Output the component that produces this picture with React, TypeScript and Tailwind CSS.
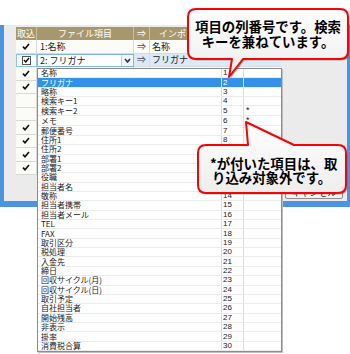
import { Fragment } from "react";

const ITEMS = [
  "名称",
  "フリガナ",
  "略称",
  "検索キー1",
  "検索キー2",
  "メモ",
  "郵便番号",
  "住所1",
  "住所2",
  "部署1",
  "部署2",
  "役職",
  "担当者名",
  "敬称",
  "担当者携帯",
  "担当者メール",
  "TEL",
  "FAX",
  "取引区分",
  "税処理",
  "入金先",
  "締日",
  "回収サイクル(月)",
  "回収サイクル(日)",
  "取引予定",
  "自社担当者",
  "開始残高",
  "非表示",
  "掛率",
  "消費税合算",
];

const CHECKS = ["y", "box", "y", "y", "", "", "y", "y", "y", "y"];

function Check() {
  return (
    <svg width="8" height="7" viewBox="0 0 8 7">
      <path d="M1 3.6 L3 5.8 L7 1" fill="none" stroke="#111" strokeWidth="1.6" />
    </svg>
  );
}

function Callouts() {
  return (
    <svg className="pointer-events-none absolute inset-0" width="350" height="354">
      <defs>
        <linearGradient id="fill" x1="0" y1="0" x2="0" y2="1">
          <stop offset="0" stopColor="#ffffff" />
          <stop offset="1" stopColor="#ededed" />
        </linearGradient>
      </defs>
      <path
        d="M197.5,10.5 H341.5 Q349.5,10.5 349.5,18.5 V52.5 Q349.5,60.5 341.5,60.5 H244.5 L230.5,78.5 L233.5,60.5 H197.5 Q189.5,60.5 189.5,52.5 V18.5 Q189.5,10.5 197.5,10.5 Z"
        fill="#555"
        opacity="0.45"
      />
      <path
        d="M196,9 H340 Q348,9 348,17 V51 Q348,59 340,59 H243 L229,77 L232,59 H196 Q188,59 188,51 V17 Q188,9 196,9 Z"
        fill="url(#fill)"
        stroke="#ff0000"
        strokeWidth="2"
        strokeLinejoin="round"
      />
      <path
        d="M207.5,146.5 H249.5 L247.5,123.5 L295.5,146.5 H339.5 Q347.5,146.5 347.5,154.5 V186.5 Q347.5,194.5 339.5,194.5 H207.5 Q199.5,194.5 199.5,186.5 V154.5 Q199.5,146.5 207.5,146.5 Z"
        fill="#555"
        opacity="0.45"
      />
      <path
        d="M206,145 H248 L246,122 L294,145 H338 Q346,145 346,153 V185 Q346,193 338,193 H206 Q198,193 198,185 V153 Q198,145 206,145 Z"
        fill="url(#fill)"
        stroke="#ff0000"
        strokeWidth="2"
        strokeLinejoin="round"
      />
    </svg>
  );
}

export default function App() {
  return (
    <div className="relative h-[354px] w-[350px] overflow-hidden bg-white font-['Noto_Sans_CJK_JP','Liberation_Sans',sans-serif] text-[#1a1a1a]">
      <div className="mt-[25px] flex h-[182px] w-[350px] flex-col border-b-[6px] border-l-4 border-r-[3px] border-[#4a94e2] bg-[#ebebeb] pl-[12px] pt-[2px]">
        <div className="w-[265px] bg-[#fbfbf8] text-[9px] leading-none">
          <div className="flex h-[13px] bg-[#a6986c] text-white">
            <div className="flex w-[21px] items-center justify-center border-r border-[#c9bfa3]">取込</div>
            <div className="flex w-[97px] items-center justify-center border-r border-[#c9bfa3]">ファイル項目</div>
            <div className="flex w-[16px] items-center justify-center border-r border-[#c9bfa3]">⇒</div>
            <div className="flex w-[131px] items-center pl-[9px]">インポート先項目</div>
          </div>
          {CHECKS.map((c, i) => (
            <div key={i} className="flex h-[13.5px]">
              {c === "box" ? (
                <Fragment>
                  <div className="flex w-[21px] items-center justify-center border border-[#8cc6f0] bg-white">
                    <div className="flex h-[9px] w-[9px] items-center justify-center border border-[#555] bg-white">
                      <svg width="7" height="6" viewBox="0 0 7 6">
                        <path d="M1 3 L2.8 5 L6 1" fill="none" stroke="#111" strokeWidth="1.4" />
                      </svg>
                    </div>
                  </div>
                  <div className="flex w-[97px] items-center justify-between border border-[#7eb4e6] bg-white pl-[2px]">
                    <span>2: フリガナ</span>
                    <div className="flex h-full w-[12px] items-center justify-center border-l border-[#b9d4ee] bg-[#f3f7fb]">
                      <svg width="7" height="5" viewBox="0 0 7 5">
                        <path d="M1 1 L3.5 4 L6 1" fill="none" stroke="#1d3b6e" strokeWidth="1.6" />
                      </svg>
                    </div>
                  </div>
                  <div className="flex w-[16px] items-center justify-center border-b border-r border-[#d6dde6] bg-[#dce9f6] text-[#444]">⇒</div>
                  <div className="flex w-[131px] items-center border-b border-[#d6dde6] bg-[#dce9f6] pl-[2px]">フリガナ</div>
                </Fragment>
              ) : (
                <Fragment>
                  <div className="flex w-[21px] items-center justify-center border-b border-r border-[#d9d9d9]">
                    {c === "y" && <Check />}
                  </div>
                  <div className="flex w-[97px] items-center border-b border-r border-[#d9d9d9] pl-[3px]">
                    {i === 0 ? "1:名称" : ""}
                  </div>
                  <div className="flex w-[16px] items-center justify-center border-b border-r border-[#d9d9d9] text-[#444]">
                    {i === 0 ? "⇒" : ""}
                  </div>
                  <div className="flex w-[131px] items-center border-b border-[#d9d9d9] pl-[2px]">
                    {i === 0 ? "名称" : ""}
                  </div>
                </Fragment>
              )}
            </div>
          ))}
        </div>
        <div className="mr-[4px] mt-[11px] flex h-[13px] w-[58px] items-center justify-center self-end rounded-[2px] border border-[#8e8e8e] bg-[#f2f2f2] text-[9px] leading-none">
          キャンセル
        </div>
      </div>

      <div className="absolute left-[37px] top-[68px] flex h-[284px] w-[245px] flex-col border border-[#8c8c8c] bg-white text-[8px] leading-none shadow-[1px_1px_0_#bdbdbd]">
        {ITEMS.map((name, i) => {
          const sel = i === 1;
          return (
            <div
              key={name}
              className={`flex flex-1 items-center border-b border-[#ececec] ${sel ? "bg-[#3592ea] text-white" : ""}`}
            >
              <div className="flex h-full w-[183px] items-center pl-[3px]">{name}</div>
              <div className="flex h-full w-[22px] items-center border-l border-[#dcdcdc] pl-[1px] font-['Liberation_Sans',sans-serif]">
                {i + 1}
              </div>
              <div className="flex h-full flex-1 items-center border-l border-[#dcdcdc] pl-[2px] font-['Liberation_Sans',sans-serif] text-[9px]">
                {i === 4 || i === 5 ? "*" : ""}
              </div>
            </div>
          );
        })}
      </div>

      <Callouts />

      <div className="absolute left-[188px] top-[9px] flex h-[50px] w-[160px] flex-col items-center justify-center text-[13.4px] font-bold leading-[15px] text-black">
        <span>項目の列番号です。検索</span>
        <span>キーを兼ねています。</span>
      </div>
      <div className="absolute left-[198px] top-[145px] flex h-[48px] w-[148px] flex-col justify-center pl-[12px] pt-[2px] text-[13.4px] font-bold leading-[14px] text-black">
        <span>*が付いた項目は、取</span>
        <span className="pl-[2px]">り込み対象外です。</span>
      </div>
    </div>
  );
}
